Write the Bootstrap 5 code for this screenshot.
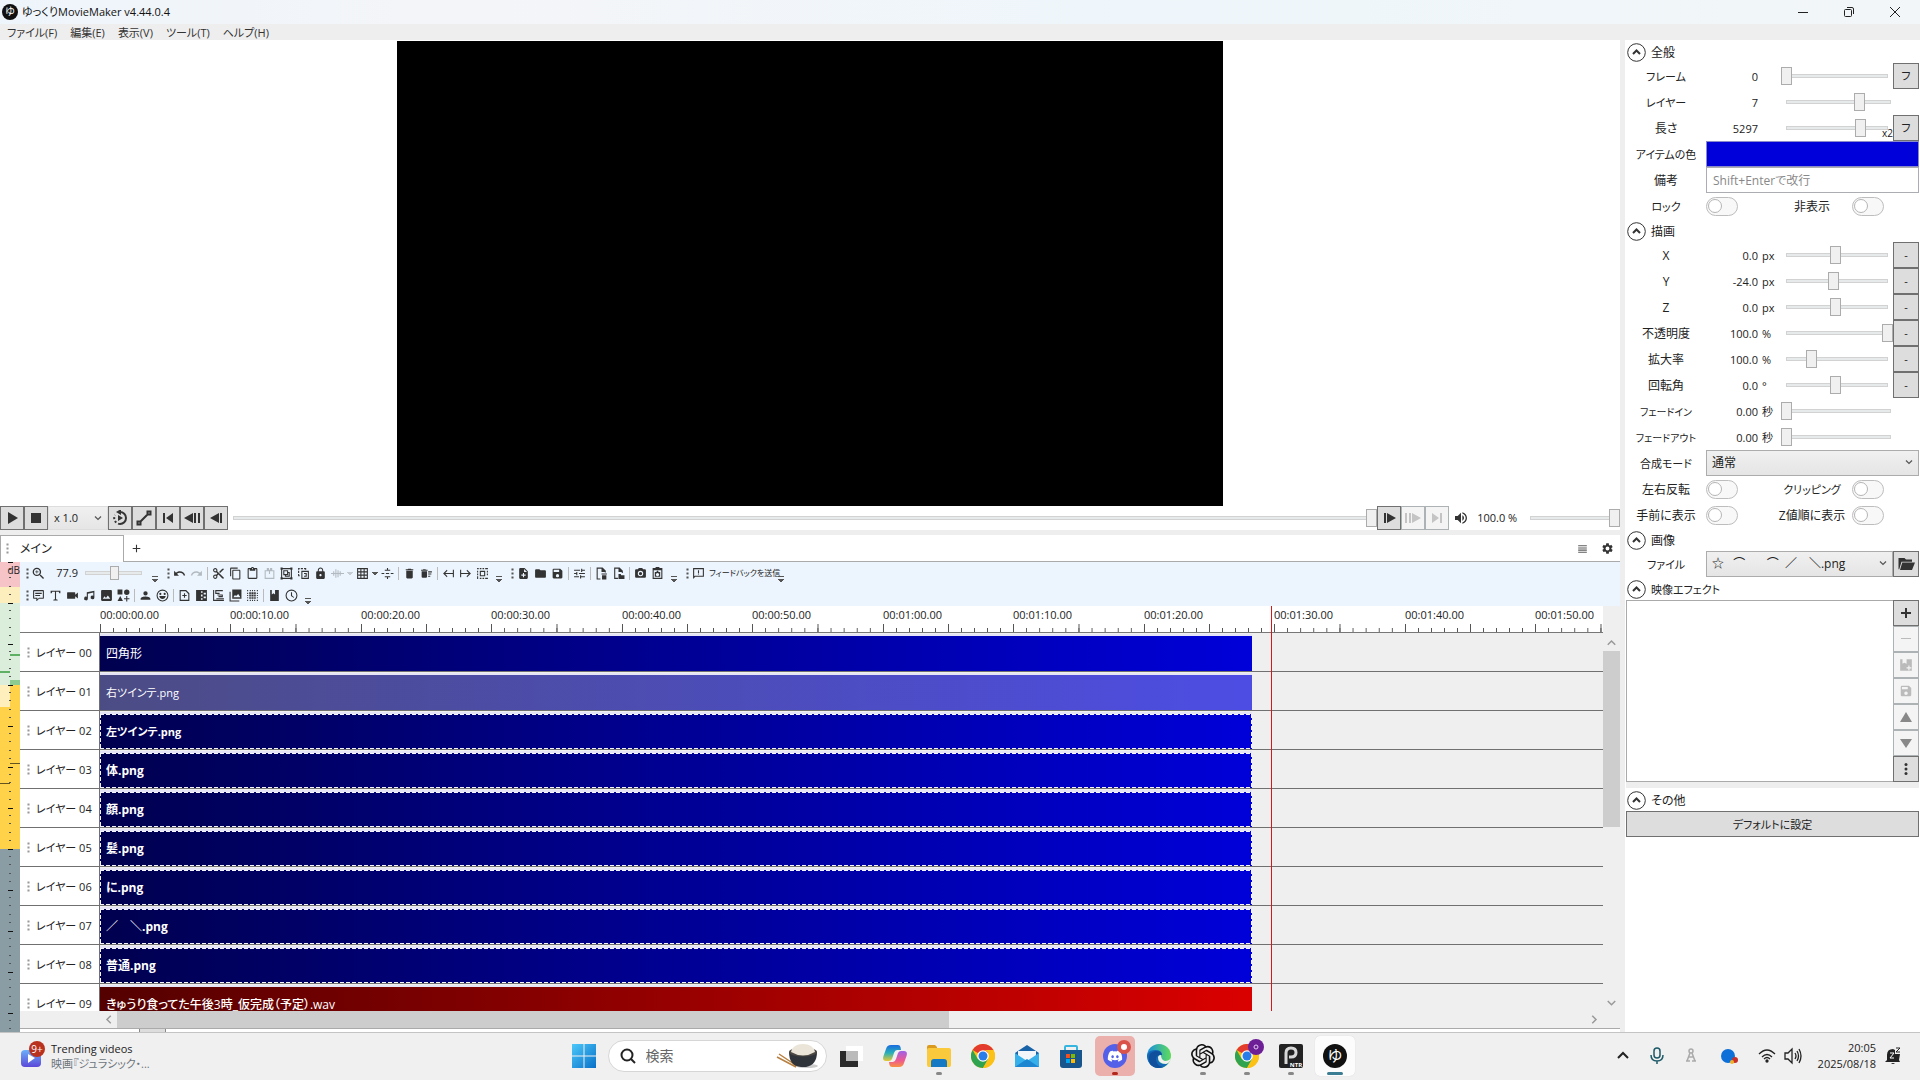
<!DOCTYPE html>
<html lang="ja">
<head>
<meta charset="utf-8">
<meta name="viewport" content="width=device-width, initial-scale=1">
<title>ゆっくりMovieMaker v4.44.0.4</title>
<link rel="stylesheet" href="https://cdn.jsdelivr.net/npm/bootstrap@5.3.0/dist/css/bootstrap.min.css">
<style>
html,body{height:100%}
body{font-family:"Open Sans","Noto Sans CJK JP",sans-serif;font-size:12px;line-height:16px;color:#222;background:#fff;font-feature-settings:"palt";overflow:hidden}
button,select,input{font-family:inherit;font-feature-settings:inherit}
svg{display:block;flex:none}
.num{font-size:11px}
.kana{font-size:11px}
.kana-s{font-size:10px}
.min0{min-width:0;min-height:0}
/* title and menu */
.titlebar{height:24px;padding:0 2px;background:linear-gradient(90deg,#eef5fb,#f4f5f8 25%,#eef6fb 60%,#f2f6f8);color:#111}
.titlebar .app-name{font-size:11px}
.winbtn{width:46px;height:20px;border:0;background:none;padding:0;display:flex;align-items:center;justify-content:center}
.menubar{height:16px;background:#eee;padding:0 7px;gap:13px}
.menubar a{color:#333;text-decoration:none;font-size:11px;line-height:17px}
/* preview */
.workspace{flex:1 1 0;min-height:0}
.splitter{width:5px;background:#eee}
.preview{height:466px;padding-top:1px}
.screen{height:100%;aspect-ratio:16/9;background:#000}
.tbtn{width:24px;height:24px;padding:0;border:1px solid #707070;border-radius:0;background:#ddd;display:flex;align-items:center;justify-content:center;flex:none}
.tbtn svg{width:16px;height:16px;fill:#333}
.tbtn:disabled{background:#f4f4f4;border-color:#adb2b5;opacity:1}
.tbtn:disabled svg{fill:#c4c4c4}
.combo{appearance:none;border:1px solid #acacac;border-radius:0;color:#222;background:url("data:image/svg+xml,%3Csvg xmlns='http://www.w3.org/2000/svg' viewBox='0 0 8 8'%3E%3Cpath d='M1 2.500l3 3 3-3' fill='none' stroke='%23555' stroke-width='1.200'/%3E%3C/svg%3E") no-repeat right 5px top 7px/8px 8px,linear-gradient(#f0f0f0,#e5e5e5);padding:0 16px 0 5px}
.combo.speed{width:60px;height:24px;border-color:#ddd;font-size:11px}
/* sliders */
.slide{appearance:none;margin:0;padding:0;height:20px;min-width:0;background:linear-gradient(#e7eaea,#e7eaea) center/calc(100% - 12px) 2px no-repeat,linear-gradient(#d2d2d2,#d2d2d2) center/calc(100% - 10px) 4px no-repeat}
.slide::-webkit-slider-runnable-track{height:18px;background:none}
.slide::-webkit-slider-thumb{appearance:none;width:11px;height:18px;background:#f0f0f0;border:1px solid #acacac;border-radius:0}
.slide.volume{width:95px}
.slide.tiny{width:67px}
.slide.tiny::-webkit-slider-runnable-track{height:14px}
.slide.tiny::-webkit-slider-thumb{width:9px;height:14px}
/* timeline tabs */
.tabstrip{height:32px;border-top:5px solid #eee;border-bottom:1px solid #aaa}
.maintab{width:124px;height:27px;border:1px solid #aaa;border-bottom:0;background:#fff;color:#222;padding:0 0 0 3px;border-radius:0;font-size:12px;text-align:left;gap:10px}
.dots{width:6px;height:11px;background:radial-gradient(circle,#555 40%,transparent 50%) center/3px 4px repeat-y;flex:none}
.dots.faint{opacity:.6}
/* level meter */
.meter{width:20px;flex:none;font-size:10px;color:#222;position:relative;background:
 linear-gradient(#111,#111) 8px 0/5px 1px no-repeat,
 linear-gradient(#f6c4c7 25px,#fdeebd 25px 41px,#daeedb 41px 123px,#ffefbd 123px 145px,#ffd24a 145px 287px,#8a9ca4 287px)}
.meter .right-level{position:absolute;right:0;width:10px;top:118px;height:169px;background:linear-gradient(#8ccb8f 5px,#ffd24a 5px)}
.meter .peak{position:absolute;height:2px;width:10px;background:#5fb065}
.meter .peak.dark{background:#63531e;height:1px}
.meter .scale{position:absolute;inset:0;background:
 linear-gradient(#111 1px,transparent 1px) 8px 0/5px 41px repeat-y,
 linear-gradient(#555 1px,transparent 1px) 9px 7px/2px 41px repeat-y,
 linear-gradient(#555 1px,transparent 1px) 9px 15px/2px 41px repeat-y,
 linear-gradient(#555 1px,transparent 1px) 9px 24px/2px 41px repeat-y,
 linear-gradient(#555 1px,transparent 1px) 9px 32px/2px 41px repeat-y}
.meter b{position:absolute;right:0;top:0;font-weight:400}
/* tool bars */
.tools{background:#ecf5fe;padding-left:4px}
.toolrow{height:22px;display:flex;align-items:center}
.tool{width:17px;height:20px;padding:0;border:0;background:none;display:flex;align-items:center;justify-content:center;flex:none}
.tool svg,.feedback svg{width:13px;height:13px;fill:#333;stroke:none}
.tool.off svg{opacity:.3}
.tsep{width:5px;height:13px;background:linear-gradient(#bbb,#bbb) center/1px 100% no-repeat;flex:none}
.zoomval{width:33px;text-align:right;padding-right:2px}
.more{width:16px;height:20px;padding:11px 0 0 5px;border:0;background:none;margin-right:2px}
.more i,.caret{display:block;width:6px;height:6px;border-top:1px solid #555;background:linear-gradient(#555,#555) center 3px/4px 1px no-repeat,linear-gradient(#555,#555) center 4px/2px 1px no-repeat,linear-gradient(#555,#555) center 2px/6px 1px no-repeat}
.caret{width:8px;height:6px;border:0;flex:none}
.feedback{border:0;background:none;padding:0 0 0 2px;font-size:8px;width:83px;height:20px;color:#222;white-space:nowrap}
/* ruler and layers */
.ruler{height:27px;border-bottom:1px solid #777;padding-left:80px;display:grid;grid-template-columns:repeat(6,130px 131px);overflow:hidden;font-size:11px;flex:none}
.ruler span{padding-top:1px;background:linear-gradient(90deg,#555 1px,transparent 1px) 0 100%/50% 8px repeat-x,linear-gradient(90deg,#555 1px,transparent 1px) 0 100%/10% 4px repeat-x}
.layers{flex:1 1 0;min-height:0;overflow:hidden;background:#efefef;position:relative}
.layer{height:39px;border-bottom:1px solid #707070;display:flex}
.layer-name{width:80px;border-right:1px solid #707070;background:#fff;padding:1px 0 0 5px;font-size:11px;display:flex;align-items:center;gap:5px;flex:none}
.lane{flex:1;padding-top:3px}
.clip{width:77%;max-width:1152px;height:35px;padding-left:6px;color:#fff;display:flex;align-items:center;--fill:linear-gradient(90deg,#00004f,#0000d9);background:var(--fill);box-shadow:0 -2px #e4e4f6}
.clip.picked{font-weight:700;background:
 linear-gradient(90deg,#f4f4ff 4px,transparent 4px) 0 0/6px 1px repeat-x,
 linear-gradient(90deg,#f4f4ff 4px,transparent 4px) 0 100%/6px 1px repeat-x,
 linear-gradient(#f4f4ff 4px,transparent 4px) 0 0/1px 6px repeat-y,
 linear-gradient(#f4f4ff 4px,transparent 4px) 100% 0/1px 6px repeat-y,var(--fill)}
.clip.dim{--fill:linear-gradient(90deg,#4c4c85,#4d4de4)}
.clip.sound{--fill:linear-gradient(90deg,#540000,#da0000);font-weight:500}
.playhead{position:absolute;top:0;bottom:0;left:1251px;width:1px;background:#d81818}
.vbar{width:17px;background:#efefef;flex:none}
.vbar button,.hbar button{border:0;padding:0;background:none;width:17px;height:17px;display:flex;align-items:center;justify-content:center;flex:none}
.vbar svg,.hbar svg{width:9px;height:9px;fill:none;stroke:#999;stroke-width:2}
.vthumb{height:176px;background:#cdcdcd}
.hbar{height:17px;padding-left:80px;padding-right:17px;background:#efefef;flex:none}
.hthumb{width:832px;background:#cdcdcd}
.footstrip{height:4px;border-top:1px solid #aaa;background:#fff;flex:none}
.footstrip i{height:3px;width:120px;border-right:1px solid #888}
.footstrip i+i{width:26px;background:#ddd}
/* properties */
.props{width:295px;padding:0 1px}
.sect{height:23px;display:flex;align-items:center;gap:5px;padding:2px 0 0 1px;border:0;background:none;color:#222;width:100%}
.sect svg{width:19px;height:19px;fill:none;stroke:#333}
.prow{height:26px;display:grid;grid-template-columns:80px 52px 23px 112px 26px;align-items:center}
.prow>.slide:last-child{width:115px}
.prow>label{text-align:center;line-height:16px;padding-top:1px;white-space:nowrap}
.prow .val{text-align:right;font-size:11px;padding-top:1px}
.prow .unit{padding:1px 0 0 4px;font-size:11px}
.pbtn{width:26px;height:26px;border:1px solid #707070;background:#ddd;padding:0;font-size:11px;color:#222;display:flex;align-items:center;justify-content:center}
.pbtn:disabled{background:#f4f4f4;border-color:#adb2b5}
.pbtn svg{width:14px;height:14px;fill:#333}
.pbtn .big{width:18px;height:18px}
.pbtn:disabled svg{fill:#bbb}
.pbtn:disabled .arrow{fill:#888}
.prow.wide{grid-template-columns:80px 1fr}
.prow.pair{grid-template-columns:80px 66px 80px 1fr}
.prow.path{grid-template-columns:80px 1fr 26px}
.sw{appearance:none;width:32px;height:19px;margin:0;border:1px solid #bdbdbd;border-radius:10px;background:#f8f8f8;display:flex;align-items:center;padding-left:1px}
.sw::before{content:"";width:14px;height:14px;border:1px solid #b5b5b5;border-radius:50%;background:#fff}
.swatch{height:26px;border:1px solid #8a8ac8;background:#0000da;padding:0;width:100%}
.memo{height:26px;border:1px solid #abadb3;padding:0 6px;width:100%;min-width:0;border-radius:0}
.memo::placeholder{color:#888;opacity:1}
.fx{height:182px;border:1px solid #aaa;border-right:0}
.x2{position:absolute;right:0;top:9px;font-size:10px;line-height:12px;pointer-events:none}
.gapbar{height:6px;background:#eee}
.fill-btn{height:26px;border:1px solid #707070;background:#ddd;color:#222;width:100%;padding:1px 0 0}
/* taskbar */
.taskbar{height:48px;border-top:1px solid #c4c4c4;padding-bottom:2px;background:#f1f0f0;color:#222}
.side{flex:1 1 0;min-width:0}
.task{width:40px;height:40px;border:0;border-radius:5px;background:none;padding:0;display:flex;align-items:center;justify-content:center;position:relative}
.task svg{width:24px;height:24px}
.task.open::after{content:"";position:absolute;bottom:1px;width:6px;height:3px;border-radius:2px;background:#888}
.task.alert-tile{background:#ebb0ab}
.task.alert-tile::after{background:#b3261e}
.task.active{background:#fcfcfc;box-shadow:0 0 1px #ccc}
.task.active::after{width:16px;background:#3b7d92}
.findbox{width:219px;height:32px;border:1px solid #d6d6d6;border-radius:16px;background:#fff;padding:0 8px 0 11px}
.findbox input{border:0;outline:0;background:none;font-size:14px;width:110px;padding:0 0 0 10px;min-width:0}
.findbox input::placeholder{color:#666;opacity:1}
.tray{padding-right:18px}
.tray svg{width:18px;height:18px}
.widget{border:0;background:none;text-align:left;padding:0;color:#222;line-height:15px;font-size:12px;gap:6px}
.clock-text{font-size:11px;text-align:right;line-height:16px}
</style>
<script defer src="https://cdn.jsdelivr.net/npm/bootstrap@5.3.0/dist/js/bootstrap.bundle.min.js"></script>
</head>
<body class="d-flex flex-column">
<svg width="0" height="0" class="position-absolute" aria-hidden="true"><defs>
<symbol id="logo" viewBox="0 0 24 24"><circle cx="12" cy="12" r="12" fill="#111"/><text x="12" y="17" font-size="15" text-anchor="middle" fill="#fff" font-family="Noto Sans CJK JP">ゆ</text></symbol>
<symbol id="zoomin" viewBox="2 2 20 20"><path d="M15.5 14h-.79l-.28-.27A6.47 6.47 0 0 0 16 9.5 6.5 6.5 0 1 0 9.500 16c1.610 0 3.090-.59 4.230-1.570l.27.28v.79l5 4.990L20.490 19l-4.990-5zm-6 0C7.010 14 5 11.990 5 9.500S7.010 5 9.500 5 14 7.010 14 9.500 11.990 14 9.500 14zM12 10h-2v2H9v-2H7V9h2V7h1v2h2v1z"/></symbol>
<symbol id="undo" viewBox="0 0 24 24"><path d="M12.5 8c-2.650 0-5.050.99-6.900 2.600L2 7v9h9l-3.620-3.620c1.390-1.160 3.160-1.880 5.120-1.880 3.540 0 6.550 2.310 7.600 5.500l2.370-.78C21.080 11.030 17.150 8 12.500 8z"/></symbol>
<symbol id="redo" viewBox="0 0 24 24"><path transform="matrix(-1 0 0 1 24 0)" d="M12.5 8c-2.650 0-5.050.99-6.900 2.600L2 7v9h9l-3.620-3.620c1.390-1.160 3.160-1.880 5.120-1.880 3.540 0 6.550 2.310 7.600 5.500l2.370-.78C21.080 11.030 17.150 8 12.500 8z"/></symbol>
<symbol id="cut" viewBox="0 0 24 24"><path d="M9.640 7.640c.23-.5.36-1.050.36-1.640 0-2.210-1.790-4-4-4S2 3.790 2 6s1.790 4 4 4c.59 0 1.140-.13 1.640-.36L10 12l-2.360 2.360C7.140 14.130 6.590 14 6 14c-2.210 0-4 1.790-4 4s1.790 4 4 4 4-1.790 4-4c0-.59-.13-1.140-.36-1.640L12 14l7 7h3v-1L9.640 7.640zM6 8c-1.100 0-2-.89-2-2s.9-2 2-2 2 .89 2 2-.9 2-2 2zm0 12c-1.100 0-2-.89-2-2s.9-2 2-2 2 .89 2 2-.9 2-2 2zM19 3l-6 6 2 2 7-7V3z"/></symbol>
<symbol id="copy" viewBox="0 0 24 24"><path d="M16 1H4c-1.100 0-2 .9-2 2v14h2V3h12V1zm3 4H8c-1.100 0-2 .9-2 2v14c0 1.100.9 2 2 2h11c1.100 0 2-.9 2-2V7c0-1.100-.9-2-2-2zm0 16H8V7h11v14z"/></symbol>
<symbol id="paste" viewBox="0 0 24 24"><path d="M19 2h-4.180C14.400.84 13.300 0 12 0c-1.300 0-2.400.84-2.820 2H5c-1.100 0-2 .9-2 2v16c0 1.100.9 2 2 2h14c1.100 0 2-.9 2-2V4c0-1.100-.9-2-2-2zm-7 0c.55 0 1 .45 1 1s-.45 1-1 1-1-.45-1-1 .45-1 1-1zm7 18H5V4h2v3h10V4h2v16z"/></symbol>
<symbol id="pasteat" viewBox="0 0 24 24"><path d="M7 2h4v3h2V2h4v4h4v16H3V6h4zM5 8v12h14V8h-6v5h-2V8z"/></symbol>
<symbol id="group" viewBox="0 0 24 24"><path fill-rule="evenodd" d="M1 1h4v1h14V1h4v4h-1v14h1v4h-4v-1H5v1H1v-4h1V5H1zm4 3v1H4v14h1v1h14v-1h1V5h-1V4zM6 6h9v3h3v9H9v-3H6zm2 2v5h5V8zm7 3v4h-4v1h5v-5z"/></symbol>
<symbol id="ungroup" viewBox="0 0 24 24"><path fill-rule="evenodd" d="M2 2h3v2H4v1H2zm5 0h4v2H7zm6 0h4v3h-2V4h-2zM2 7h2v4H2zm0 6h2v2h1v2H2zM8 7h14v15H8zm2 2v11h10V9zm3 2h5v7h-5v-2h3v-3h-3z"/></symbol>
<symbol id="lock" viewBox="0 0 24 24"><path d="M18 8h-1V6c0-2.760-2.240-5-5-5S7 3.240 7 6v2H6c-1.100 0-2 .9-2 2v10c0 1.100.9 2 2 2h12c1.100 0 2-.9 2-2V10c0-1.100-.9-2-2-2zm-6 9c-1.100 0-2-.9-2-2s.9-2 2-2 2 .9 2 2-.9 2-2 2zm3.100-9H8.900V6a3.100 3.100 0 0 1 6.200 0v2z"/></symbol>
<symbol id="wave" viewBox="0 0 24 24"><path d="M0 11h4V8h2v3h2V4h2v7h2V6h2v5h2V8h2v3h6v2h-6v3h-2v-3h-2v6h-2v-6h-2v7H8v-7H6v3H4v-3H0z"/></symbol>
<symbol id="grid" viewBox="0 0 24 24"><path fill-rule="evenodd" d="M2 2h20v20H2zm2 2v4h4V4zm6 0v4h4V4zm6 0v4h4V4zM4 10v4h4v-4zm6 0v4h4v-4zm6 0v4h4v-4zM4 16v4h4v-4zm6 0v4h4v-4zm6 0v4h4v-4z"/></symbol>
<symbol id="snap" viewBox="0 0 24 24"><path d="M11 2h2v3h4v2H7V5h4zM1 11h5v2H1zm8 0h6v2H9zm9 0h5v2h-5zM7 17h10v2h-4v3h-2v-3H7z"/></symbol>
<symbol id="trash" viewBox="0 0 24 24"><path d="M6 19c0 1.100.9 2 2 2h8c1.100 0 2-.9 2-2V7H6v12zM19 4h-3.500l-1-1h-5l-1 1H5v2h14V4z"/></symbol>
<symbol id="trashlist" viewBox="0 0 24 24"><path d="M3 18a2 2 0 0 0 2 2h6a2 2 0 0 0 2-2V8H3zM14 5h-3l-1-1H6L5 5H2v2h12zm1 3h7v2h-7zm0 4h6v2h-6zm0 4h4v2h-4z"/></symbol>
<symbol id="toleft" viewBox="0 0 24 24"><path d="M20 5h2v14h-2v-6H6l4 4-1 2-7-7 7-7 1 2-4 4h14z"/></symbol>
<symbol id="toright" viewBox="0 0 24 24"><path transform="matrix(-1 0 0 1 24 0)" d="M20 5h2v14h-2v-6H6l4 4-1 2-7-7 7-7 1 2-4 4h14z"/></symbol>
<symbol id="select" viewBox="0 0 24 24"><path fill-rule="evenodd" d="M2 2h3v2H2zm5 0h3v2H7zm5 0h3v2h-3zm5 0h5v2h-5zM2 7h2v3H2zm0 5h2v3H2zm0 5h2v5H2zm5 3h3v2H7zm5 0h3v2h-3zm5 0h5v2h-5zm3-13h2v3h-2zm0 5h2v3h-2zM7 7h10v10H7zm2 2v6h6V9z"/></symbol>
<symbol id="filenew" viewBox="0 0 24 24"><path fill-rule="evenodd" d="M6 2a2 2 0 0 0-2 2v16c0 1.100.9 2 2 2h12a2 2 0 0 0 2-2V8l-6-6zm5 9h2v3h3v2h-3v3h-2v-3H8v-2h3zm2-7.500L18.500 9H13z"/></symbol>
<symbol id="folder" viewBox="0 0 24 24"><path d="M10 4H4a2 2 0 0 0-2 2v12c0 1.100.9 2 2 2h16c1.100 0 2-.9 2-2V8c0-1.100-.9-2-2-2h-8l-2-2z"/></symbol>
<symbol id="folderopen" viewBox="0 0 24 24"><path d="M2 4h8l2 2h8v3H6L3 19H2zm5 6h17l-4 10H4z"/></symbol>
<symbol id="save" viewBox="0 0 24 24"><path fill-rule="evenodd" d="M17 3H5a2 2 0 0 0-2 2v14a2 2 0 0 0 2 2h14c1.100 0 2-.9 2-2V7l-4-4zm-5 16a3 3 0 1 1 0-6 3 3 0 0 1 0 6zm3-10H5V5h10v4z"/></symbol>
<symbol id="tune" viewBox="0 0 24 24"><path d="M2 5h11v2H2zm13-2h2v2h5v2h-5v2h-2zM2 11h4V9h2v6H6v-2H2zm9 0h11v2H11zm-9 6h9v2H2zm11-2h2v2h7v2h-7v2h-2z"/></symbol>
<symbol id="filetrash" viewBox="0 0 24 24"><path d="M3 1h11l6 6v3h-2V9h-6V3H5v18h5v2H3zm9 11h10v2H12zm1 3h8v8h-8z"/></symbol>
<symbol id="filecopy" viewBox="0 0 24 24"><path d="M4 1h10l6 6v4h-2V9h-6V3H6v17h5v2H4zm8 12h4l1 2h6v7H12z"/></symbol>
<symbol id="camera" viewBox="0 0 24 24"><path fill-rule="evenodd" d="M4 4h3l2-2h6l2 2h3a2 2 0 0 1 2 2v12a2 2 0 0 1-2 2H4a2 2 0 0 1-2-2V6a2 2 0 0 1 2-2m8 3a5 5 0 1 0 0 10 5 5 0 0 0 0-10m0 2a3 3 0 1 1 0 6 3 3 0 0 1 0-6"/></symbol>
<symbol id="camclip" viewBox="0 0 24 24"><path fill-rule="evenodd" d="M3 2h5l1-2h6l1 2h5v20H3zm2 4v14h14V6zm2 3h3l1-2h2l1 2h3v9H7zm5 2a3 3 0 1 0 0 6 3 3 0 0 0 0-6"/></symbol>
<symbol id="feedback" viewBox="0 0 24 24"><path fill-rule="evenodd" d="M2 2h20v16H6l-4 4zm2 2v13l1-1h15V4zm7 2h2v5h-2zm0 6h2v2h-2z"/></symbol>
<symbol id="comment" viewBox="0 0 24 24"><path fill-rule="evenodd" d="M3 2h18l1 1v14l-1 1h-8l-4 4H8v-4H3l-1-1V3zm1 2v12h6v3l3-3h7V4zm2 3h12v2H6zm0 4h9v2H6z"/></symbol>
<symbol id="tee" viewBox="0 0 24 24"><path d="M3 3h18v5h-2l-1-3h-5v14l3 1v1H8v-1l3-1V5H6L5 8H3z"/></symbol>
<symbol id="video" viewBox="0 0 24 24"><path d="M17 10.500V7c0-.55-.45-1-1-1H3c-.55 0-1 .45-1 1v10c0 .55.45 1 1 1h13c.55 0 1-.45 1-1v-3.500l5 4v-11l-5 4z"/></symbol>
<symbol id="music" viewBox="0 0 24 24"><path d="M21 3v12.500a3.500 3.500 0 1 1-2-3.160V6.470l-10 2.130v8.900a3.500 3.500 0 1 1-2-3.160V6l14-3z"/></symbol>
<symbol id="image" viewBox="0 0 24 24"><path d="M22 20V4c0-1.100-.9-2-2-2H4c-1.100 0-2 .9-2 2v16c0 1.100.9 2 2 2h16c1.100 0 2-.9 2-2zM8.500 13.500l2.500 3L14.500 12l4.500 6H5l3.500-4.500z"/></symbol>
<symbol id="images" viewBox="0 0 24 24"><path fill-rule="evenodd" d="M6 1h17v17H6zM1 5h2v16h16v2H1zm7 10h13l-4-6-4 4-2-2z"/></symbol>
<symbol id="shapes" viewBox="0 0 24 24"><path d="M1 1h9v9H1zM18 1a5 5 0 1 1 0 10 5 5 0 0 1 0-10M6 13l5 9H1zm11 0h2v4h4v2h-4v4h-2v-4h-4v-2h4z"/></symbol>
<symbol id="person" viewBox="0 0 24 24"><path d="M12 12a4 4 0 1 0 0-8 4 4 0 0 0 0 8zm0 2c-2.670 0-9 1.340-9 4v2h18v-2c0-2.660-6.330-4-9-4z"/></symbol>
<symbol id="smile" viewBox="0 0 24 24"><path fill-rule="evenodd" d="M12 1a11 11 0 1 0 0 22 11 11 0 0 0 0-22m0 2a9 9 0 1 1 0 18 9 9 0 0 1 0-18M8 7a2 2 0 1 1 0 4 2 2 0 0 1 0-4m8 0a2 2 0 1 1 0 4 2 2 0 0 1 0-4M6 13h12c-1 7-11 7-12 0"/></symbol>
<symbol id="fileadd" viewBox="0 0 24 24"><path fill-rule="evenodd" d="M3 2h12l6 6v14H3zm2 2v16h14V9l-5-5zm6 4h2v3h3v2h-3v3h-2v-3H8v-2h3z"/></symbol>
<symbol id="trans" viewBox="0 0 24 24"><path fill-rule="evenodd" d="M2 2h20v20H2zm9 2v3h3V4zm5 3v3h4V7zm-5 3v4h3v-4zm5 4v3h4v-3zm-5 3v3h3v-3z"/></symbol>
<symbol id="gantt" viewBox="0 0 24 24"><path d="M2 2h2v18h18v2H2zm4 0h14v2H8v3h6v2H6zm4 8h10v5h-8v-2h6v-1h-8zm-2 7h14v2H8z"/></symbol>
<symbol id="dotsel" viewBox="0 0 24 24"><path d="M2 2h2v2H2zm5 0h2v2H7zm4 0h2v2h-2zm4 0h2v2h-2zm5 0h2v2h-2zM2 7h2v2H2zm18 0h2v2h-2zM2 11h2v2H2zm18 0h2v2h-2zM2 15h2v2H2zm18 0h2v2h-2zM2 20h2v2H2zm5 0h2v2H7zm4 0h2v2h-2zm4 0h2v2h-2zm5 0h2v2h-2zM6 6h3v3H6zm4 0h4v3h-4zm5 0h3v3h-3zm-9 4h3v4H6zm4 0h4v4h-4zm5 0h3v4h-3zm-9 5h3v3H6zm4 0h4v3h-4zm5 0h3v3h-3z"/></symbol>
<symbol id="book" viewBox="0 0 24 24"><path d="M4 2h3v8l3-2 3 2V2h7v20H4z"/></symbol>
<symbol id="bookadd" viewBox="0 0 24 24"><path fill-rule="evenodd" d="M2 2h4v8l3-2 4 2V2h9v20H2zm14 11h2v3h3v2h-3v3h-2v-3h-3v-2h3z"/></symbol>
<symbol id="clock" viewBox="0 0 24 24"><path fill-rule="evenodd" d="M12 1a11 11 0 1 0 0 22 11 11 0 0 0 0-22m0 2a9 9 0 1 1 0 18 9 9 0 0 1 0-18m-1 3h2v6l4 3-1 1-5-3z"/></symbol>
<symbol id="gear" viewBox="0 0 24 24"><path d="M19.140 12.940c.04-.3.06-.61.06-.94 0-.32-.02-.64-.07-.94l2.030-1.580c.18-.14.23-.41.12-.61l-1.920-3.320c-.12-.22-.37-.29-.59-.22l-2.390.96c-.5-.38-1.030-.7-1.620-.94l-.36-2.540c-.04-.24-.24-.41-.48-.41h-3.840c-.24 0-.43.17-.47.41l-.36 2.540c-.59.24-1.130.57-1.620.94l-2.390-.96c-.22-.08-.47 0-.59.22L2.740 8.870c-.12.21-.08.47.12.61l2.030 1.580c-.05.3-.09.63-.09.94s.02.64.07.94l-2.030 1.580c-.18.14-.23.41-.12.61l1.920 3.320c.12.22.37.29.59.22l2.390-.96c.5.38 1.030.7 1.620.94l.36 2.540c.05.24.24.41.48.41h3.840c.24 0 .44-.17.47-.41l.36-2.540c.59-.24 1.130-.56 1.620-.94l2.390.96c.22.08.47 0 .59-.22l1.920-3.320c.12-.22.07-.47-.12-.61l-2.010-1.580zM12 15.600a3.600 3.600 0 1 1 0-7.200 3.600 3.600 0 0 1 0 7.200z"/></symbol>
<symbol id="volume" viewBox="0 0 24 24"><path d="M3 9v6h4l5 5V4L7 9H3zm13.500 3c0-1.770-1.020-3.290-2.500-4.030v8.050c1.480-.73 2.500-2.250 2.500-4.020zM14 3.230v2.060c2.890.86 5 3.540 5 6.710s-2.110 5.850-5 6.710v2.060c4.010-.91 7-4.490 7-8.770s-2.990-7.860-7-8.770z"/></symbol>
<symbol id="fold" viewBox="0 0 19 19"><circle cx="9.500" cy="9.500" r="8.800"/><path d="M6 11l3.500-3.500L13 11" stroke-width="2"/></symbol>
<symbol id="chrome" viewBox="0 0 24 24"><circle cx="12" cy="12" r="12" fill="#fbc116"/><path d="M12 12L1.600 6A12 12 0 0 1 22.400 6z" fill="#e33b2e"/><path d="M1.600 6A12 12 0 0 0 12 24l5.200-9L12 12 6.800 15z" fill="#30a350"/><path d="M12 24l5.200-9A6 6 0 0 0 12 6h10.400A12 12 0 0 1 12 24" fill="#fbc116"/><circle cx="12" cy="12" r="5.800" fill="#fff"/><circle cx="12" cy="12" r="4.500" fill="#2a7de9"/></symbol>
<linearGradient id="gwin" x1="0" y1="0" x2="1" y2="1"><stop offset="0" stop-color="#4cc8fa"/><stop offset="1" stop-color="#0870c8"/></linearGradient>
<linearGradient id="gedge" x1="0" y1="0" x2="1" y2="0"><stop offset="0" stop-color="#1a8fe0"/><stop offset="1" stop-color="#5fdc5a"/></linearGradient>
<linearGradient id="gcop" x1="0" y1="0" x2="0" y2="1"><stop offset="0" stop-color="#1a6be0"/><stop offset=".5" stop-color="#28b0b8"/><stop offset="1" stop-color="#e8c830"/></linearGradient>
<linearGradient id="gcop2" x1="0" y1="0" x2="0" y2="1"><stop offset="0" stop-color="#a060e8"/><stop offset=".6" stop-color="#ee5a90"/><stop offset="1" stop-color="#f89040"/></linearGradient>
<linearGradient id="gvid" x1="0" y1="0" x2="0" y2="1"><stop offset="0" stop-color="#6db0fa"/><stop offset="1" stop-color="#5a48d8"/></linearGradient>
</defs></svg>

<header>
 <div class="titlebar d-flex align-items-center">
  <svg class="me-1" width="16" height="16"><use href="#logo"/></svg>
  <span class="app-name flex-grow-1">ゆっくりMovieMaker v4.44.0.4</span>
  <button class="winbtn" aria-label="最小化"><svg width="12" height="12"><path d="M1 6.500h10" stroke="#222"/></svg></button>
  <button class="winbtn" aria-label="元に戻す"><svg width="12" height="12" fill="none" stroke="#222"><rect x="1.500" y="3.500" width="7" height="7" rx="1"/><path d="M4 1.500h5q1.500 0 1.500 1.500v5"/></svg></button>
  <button class="winbtn" aria-label="閉じる"><svg width="12" height="12"><path d="M1 1l10 10M11 1L1 11" stroke="#222"/></svg></button>
 </div>
 <nav class="menubar d-flex" aria-label="メニュー"><a href="#">ファイル(F)</a><a href="#">編集(E)</a><a href="#">表示(V)</a><a href="#">ツール(T)</a><a href="#">ヘルプ(H)</a></nav>
</header>

<main class="workspace d-flex">
 <div class="d-flex flex-column flex-grow-1 min0">
  <section class="preview d-flex justify-content-center"><div class="screen"></div></section>
  <div class="d-flex align-items-center">
   <button class="tbtn" aria-label="再生"><svg viewBox="0 0 16 16"><path d="M4 2l10 6-10 6z"/></svg></button>
   <button class="tbtn" aria-label="停止"><svg viewBox="0 0 16 16"><path d="M3 3h10v10H3z"/></svg></button>
   <select class="combo speed" aria-label="再生速度"><option>x 1.0</option></select>
   <button class="tbtn" aria-label="ループ"><svg viewBox="0 0 16 16"><path d="M8 2a6 6 0 0 1 0 12" fill="none" stroke="#333" stroke-width="2"/><path d="M8 14a6 6 0 0 1-5-9" fill="none" stroke="#333" stroke-width="2" stroke-dasharray="2 2"/><path d="M9-1v6L4 2zM6 5l5 3-5 3z"/></svg></button>
   <button class="tbtn" aria-label="軌跡"><svg viewBox="0 0 16 16"><path d="M4 12L12 4M1.500 11.500h3v3h-3zM11.500 1.500h3v3h-3z" fill="#ddd" stroke="#333" stroke-width="2"/></svg></button>
   <button class="tbtn" aria-label="先頭へ"><svg viewBox="0 0 16 16"><path d="M3 3h2v10H3zM13 3v10L6 8z"/></svg></button>
   <button class="tbtn" aria-label="戻る"><svg viewBox="0 0 16 16"><path d="M9 3v10L0 8zM10 3h2v10h-2zM14 3h2v10h-2z"/></svg></button>
   <button class="tbtn" aria-label="1フレーム戻る"><svg viewBox="0 0 16 16"><path d="M11 3v10L2 8zM12 3h2v10h-2z"/></svg></button>
   <input type="range" class="slide flex-grow-1" aria-label="再生位置" min="0" max="100" value="100">
   <button class="tbtn" aria-label="1フレーム進む"><svg viewBox="0 0 16 16"><path d="M3 3h2v10H3zM6 3v10l9-5z"/></svg></button>
   <button class="tbtn" aria-label="進む" disabled><svg viewBox="0 0 16 16"><path d="M0 3h2v10H0zM4 3h2v10H4zM7 3v10l9-5z"/></svg></button>
   <button class="tbtn" aria-label="末尾へ" disabled><svg viewBox="0 0 16 16"><path d="M3 3v10l7-5zM11 3h2v10h-2z"/></svg></button>
   <svg class="ms-1 me-2" width="16" height="16" fill="#333"><use href="#volume"/></svg>
   <label for="vol" class="num me-2">100.0 %</label>
   <input id="vol" type="range" class="slide volume" value="100">
  </div>
  <div class="tabstrip d-flex align-items-center">
   <button class="maintab d-flex align-items-center"><span class="dots faint"></span>メイン</button>
   <button class="tool ms-1" aria-label="タブを追加"><svg viewBox="0 0 12 12"><path d="M5 2h1v3h3v1H6v3H5V6H2V5h3z" transform="translate(.5 .5)"/></svg></button>
   <button class="tool ms-auto me-2" aria-label="一覧"><svg viewBox="0 0 12 12"><path d="M2 3h8v1H2zM2 5h8v1H2zM2 7h8v1H2zM2 9h8v1H2z" opacity=".8"/></svg></button>
   <button class="tool me-1" aria-label="設定"><svg><use href="#gear"/></svg></button>
  </div>
  <div class="d-flex flex-grow-1 min0">
   <div class="meter"><div class="right-level"></div><div class="scale"></div><i class="peak" style="top:92px;left:10px"></i><i class="peak" style="top:109px;left:0"></i><i class="peak dark" style="top:201px;left:10px"></i><i class="peak dark" style="top:221px;left:0"></i><b>dB</b></div>
   <div class="d-flex flex-column flex-grow-1 min0">
    <div class="tools" role="toolbar" aria-label="ツール">
     <div class="toolrow">
      <span class="dots"></span>
      <button class="tool" aria-label="拡大"><svg><use href="#zoomin"/></svg></button>
      <label for="tz" class="num zoomval">77.9</label>
      <input id="tz" type="range" class="slide tiny" value="52">
      <button class="more" aria-label="その他"><i></i></button><span class="dots"></span>
      <button class="tool" aria-label="元に戻す"><svg><use href="#undo"/></svg></button>
      <button class="tool off" aria-label="やり直し"><svg><use href="#redo"/></svg></button><span class="tsep"></span>
      <button class="tool" aria-label="切り取り"><svg><use href="#cut"/></svg></button>
      <button class="tool" aria-label="コピー"><svg><use href="#copy"/></svg></button>
      <button class="tool" aria-label="貼り付け"><svg><use href="#paste"/></svg></button>
      <button class="tool off" aria-label="挿入貼り付け"><svg><use href="#pasteat"/></svg></button>
      <button class="tool" aria-label="グループ化"><svg><use href="#group"/></svg></button>
      <button class="tool" aria-label="グループ解除"><svg><use href="#ungroup"/></svg></button>
      <button class="tool" aria-label="ロック"><svg><use href="#lock"/></svg></button>
      <button class="tool off" aria-label="波形"><svg><use href="#wave"/></svg></button><i class="caret opacity-25"></i>
      <button class="tool" aria-label="グリッド"><svg><use href="#grid"/></svg></button><i class="caret"></i>
      <button class="tool" aria-label="スナップ"><svg><use href="#snap"/></svg></button><span class="tsep"></span>
      <button class="tool" aria-label="削除"><svg><use href="#trash"/></svg></button>
      <button class="tool" aria-label="詰めて削除"><svg><use href="#trashlist"/></svg></button><span class="tsep"></span>
      <button class="tool" aria-label="左を選択"><svg><use href="#toleft"/></svg></button>
      <button class="tool" aria-label="右を選択"><svg><use href="#toright"/></svg></button>
      <button class="tool" aria-label="すべて選択"><svg><use href="#select"/></svg></button>
      <button class="more" aria-label="その他"><i></i></button><span class="dots"></span>
      <button class="tool" aria-label="新規"><svg><use href="#filenew"/></svg></button>
      <button class="tool" aria-label="開く"><svg><use href="#folder"/></svg></button>
      <button class="tool" aria-label="保存"><svg><use href="#save"/></svg></button><span class="tsep"></span>
      <button class="tool" aria-label="調整"><svg><use href="#tune"/></svg></button><span class="tsep"></span>
      <button class="tool" aria-label="キャッシュ削除"><svg><use href="#filetrash"/></svg></button>
      <button class="tool" aria-label="書き出し"><svg><use href="#filecopy"/></svg></button><span class="tsep"></span>
      <button class="tool" aria-label="画像保存"><svg><use href="#camera"/></svg></button>
      <button class="tool" aria-label="画像コピー"><svg><use href="#camclip"/></svg></button>
      <button class="more" aria-label="その他"><i></i></button><span class="dots"></span>
      <button class="feedback d-flex align-items-center gap-1"><svg><use href="#feedback"/></svg>フィードバックを送信</button>
      <button class="more" aria-label="その他"><i></i></button>
     </div>
     <div class="toolrow">
      <span class="dots"></span>
      <button class="tool" aria-label="ボイス"><svg><use href="#comment"/></svg></button>
      <button class="tool" aria-label="テキスト"><svg><use href="#tee"/></svg></button>
      <button class="tool" aria-label="動画"><svg><use href="#video"/></svg></button>
      <button class="tool" aria-label="音声"><svg><use href="#music"/></svg></button>
      <button class="tool" aria-label="画像"><svg><use href="#image"/></svg></button>
      <button class="tool" aria-label="図形"><svg><use href="#shapes"/></svg></button><span class="tsep"></span>
      <button class="tool" aria-label="立ち絵"><svg><use href="#person"/></svg></button>
      <button class="tool" aria-label="表情"><svg><use href="#smile"/></svg></button><span class="tsep"></span>
      <button class="tool" aria-label="エフェクト"><svg><use href="#fileadd"/></svg></button>
      <button class="tool" aria-label="場面切り替え"><svg><use href="#trans"/></svg></button>
      <button class="tool" aria-label="シーン"><svg><use href="#gantt"/></svg></button>
      <button class="tool" aria-label="画面の複製"><svg><use href="#images"/></svg></button>
      <button class="tool" aria-label="グループ制御"><svg><use href="#dotsel"/></svg></button><span class="tsep"></span>
      <button class="tool" aria-label="テンプレート"><svg><use href="#book"/></svg></button>
      <button class="tool" aria-label="履歴"><svg><use href="#clock"/></svg></button>
      <button class="more" aria-label="その他"><i></i></button>
     </div>
    </div>
    <div class="d-flex flex-grow-1 min0">
     <div class="d-flex flex-column flex-grow-1 position-relative min0">
      <div class="ruler"><span>00:00:00.00</span><span>00:00:10.00</span><span>00:00:20.00</span><span>00:00:30.00</span><span>00:00:40.00</span><span>00:00:50.00</span><span>00:01:00.00</span><span>00:01:10.00</span><span>00:01:20.00</span><span>00:01:30.00</span><span>00:01:40.00</span><span>00:01:50.00</span></div>
      <div class="layers">
       <div class="layer"><div class="layer-name"><span class="dots faint"></span>レイヤー 00</div><div class="lane"><div class="clip">四角形</div></div></div>
       <div class="layer"><div class="layer-name"><span class="dots faint"></span>レイヤー 01</div><div class="lane"><div class="clip dim kana">右ツインテ.png</div></div></div>
       <div class="layer"><div class="layer-name"><span class="dots faint"></span>レイヤー 02</div><div class="lane"><div class="clip picked kana">左ツインテ.png</div></div></div>
       <div class="layer"><div class="layer-name"><span class="dots faint"></span>レイヤー 03</div><div class="lane"><div class="clip picked">体.png</div></div></div>
       <div class="layer"><div class="layer-name"><span class="dots faint"></span>レイヤー 04</div><div class="lane"><div class="clip picked">顔.png</div></div></div>
       <div class="layer"><div class="layer-name"><span class="dots faint"></span>レイヤー 05</div><div class="lane"><div class="clip picked">髪.png</div></div></div>
       <div class="layer"><div class="layer-name"><span class="dots faint"></span>レイヤー 06</div><div class="lane"><div class="clip picked">に.png</div></div></div>
       <div class="layer"><div class="layer-name"><span class="dots faint"></span>レイヤー 07</div><div class="lane"><div class="clip picked">／　＼.png</div></div></div>
       <div class="layer"><div class="layer-name"><span class="dots faint"></span>レイヤー 08</div><div class="lane"><div class="clip picked">普通.png</div></div></div>
       <div class="layer"><div class="layer-name"><span class="dots faint"></span>レイヤー 09</div><div class="lane"><div class="clip sound">きゅうり食ってた午後3時_仮完成（予定）.wav</div></div></div>
      </div>
      <div class="playhead"></div>
     </div>
     <div class="vbar d-flex flex-column pt-4">
      <button class="mt-1" aria-label="上へ"><svg viewBox="0 0 12 12"><path d="M1 9l5-5 5 5"/></svg></button>
      <div class="vthumb"></div>
      <button class="mt-auto" aria-label="下へ"><svg viewBox="0 0 12 12"><path d="M1 4l5 5 5-5"/></svg></button>
     </div>
    </div>
    <div class="hbar d-flex">
     <button aria-label="左へ"><svg viewBox="0 0 12 12"><path d="M9 1L4 6l5 5"/></svg></button>
     <div class="hthumb"></div>
     <button class="ms-auto" aria-label="右へ"><svg viewBox="0 0 12 12"><path d="M3 1l5 5-5 5"/></svg></button>
    </div>
    <div class="footstrip d-flex"><i></i><i></i></div>
   </div>
  </div>
 </div>
 <div class="splitter"></div>
 <aside class="props">
  <button class="sect"><svg><use href="#fold"/></svg>全般</button>
  <div class="prow"><label for="p1" class="kana">フレーム</label><span class="val">0</span><span class="unit"></span><input id="p1" type="range" class="slide" value="0"><button class="pbtn">フ</button></div>
  <div class="prow"><label for="p2" class="kana">レイヤー</label><span class="val">7</span><span class="unit"></span><input id="p2" type="range" class="slide" value="70"></div>
  <div class="prow"><label for="p3">長さ</label><span class="val">5297</span><span class="unit"></span><div class="position-relative d-flex"><input id="p3" type="range" class="slide w-100" value="73"><span class="x2">x2</span></div><button class="pbtn">フ</button></div>
  <div class="prow wide"><label for="p4" class="kana">アイテムの色</label><button id="p4" class="swatch" aria-label="アイテムの色"></button></div>
  <div class="prow wide"><label for="p5">備考</label><input id="p5" type="text" class="memo" placeholder="Shift+Enterで改行"></div>
  <div class="prow pair"><label for="s1" class="kana">ロック</label><input id="s1" type="checkbox" role="switch" class="sw"><label for="s2">非表示</label><input id="s2" type="checkbox" role="switch" class="sw"></div>
  <button class="sect"><svg><use href="#fold"/></svg>描画</button>
  <div class="prow"><label for="q1">X</label><span class="val">0.0</span><span class="unit">px</span><input id="q1" type="range" class="slide" value="49"><button class="pbtn">-</button></div>
  <div class="prow"><label for="q2">Y</label><span class="val">-24.0</span><span class="unit">px</span><input id="q2" type="range" class="slide" value="47"><button class="pbtn">-</button></div>
  <div class="prow"><label for="q3">Z</label><span class="val">0.0</span><span class="unit">px</span><input id="q3" type="range" class="slide" value="49"><button class="pbtn">-</button></div>
  <div class="prow"><label for="q4">不透明度</label><span class="val">100.0</span><span class="unit">%</span><input id="q4" type="range" class="slide" value="100"><button class="pbtn">-</button></div>
  <div class="prow"><label for="q5">拡大率</label><span class="val">100.0</span><span class="unit">%</span><input id="q5" type="range" class="slide" value="25"><button class="pbtn">-</button></div>
  <div class="prow"><label for="q6">回転角</label><span class="val">0.0</span><span class="unit">°</span><input id="q6" type="range" class="slide" value="49"><button class="pbtn">-</button></div>
  <div class="prow"><label for="q7" class="kana-s">フェードイン</label><span class="val">0.00</span><span class="unit">秒</span><input id="q7" type="range" class="slide" value="0"></div>
  <div class="prow"><label for="q8" class="kana-s">フェードアウト</label><span class="val">0.00</span><span class="unit">秒</span><input id="q8" type="range" class="slide" value="0"></div>
  <div class="prow wide"><label for="q9" class="kana">合成モード</label><select id="q9" class="combo w-100 h-100"><option>通常</option></select></div>
  <div class="prow pair"><label for="s3">左右反転</label><input id="s3" type="checkbox" role="switch" class="sw"><label for="s4" class="kana">クリッピング</label><input id="s4" type="checkbox" role="switch" class="sw"></div>
  <div class="prow pair"><label for="s5">手前に表示</label><input id="s5" type="checkbox" role="switch" class="sw"><label for="s6">Z値順に表示</label><input id="s6" type="checkbox" role="switch" class="sw"></div>
  <button class="sect"><svg><use href="#fold"/></svg>画像</button>
  <div class="prow path"><label for="f1" class="kana">ファイル</label><select id="f1" class="combo w-100 h-100"><option>☆&nbsp;&nbsp;&nbsp;⌒　&nbsp;&nbsp;&nbsp;⌒&nbsp;&nbsp;／　＼.png</option></select><button class="pbtn" aria-label="参照"><svg class="big"><use href="#folderopen"/></svg></button></div>
  <button class="sect"><svg><use href="#fold"/></svg><span class="kana">映像エフェクト</span></button>
  <div class="d-flex">
   <div class="fx flex-grow-1"></div>
   <div>
    <button class="pbtn" aria-label="追加"><svg viewBox="0 0 14 14"><path d="M6 2h2v4h4v2H8v4H6V8H2V6h4z"/></svg></button>
    <button class="pbtn" disabled aria-label="削除"><svg viewBox="0 0 14 14"><path d="M2 6h10v1H2z"/></svg></button>
    <button class="pbtn" disabled aria-label="テンプレートに追加"><svg><use href="#bookadd"/></svg></button>
    <button class="pbtn" disabled aria-label="保存"><svg><use href="#save"/></svg></button>
    <button class="pbtn" disabled aria-label="上へ"><svg class="arrow" viewBox="0 0 14 14"><path d="M7 2l6 10H1z"/></svg></button>
    <button class="pbtn" disabled aria-label="下へ"><svg class="arrow" viewBox="0 0 14 14"><path d="M7 12L1 3h12z"/></svg></button>
    <button class="pbtn" aria-label="メニュー"><svg viewBox="0 0 14 14"><circle cx="7" cy="2.500" r="1.500"/><circle cx="7" cy="7" r="1.500"/><circle cx="7" cy="11.500" r="1.500"/></svg></button>
   </div>
  </div>
  <div class="gapbar"></div>
  <button class="sect"><svg><use href="#fold"/></svg>その他</button>
  <button class="fill-btn kana">デフォルトに設定</button>
 </aside>
</main>

<footer class="taskbar d-flex align-items-center">
 <div class="side ps-3"><button class="widget d-flex align-items-center">
  <svg width="29" height="30" viewBox="0 0 29 30"><rect x="5" y="9" width="20" height="17" rx="4" fill="url(#gvid)"/><path d="M12 13l7 4-7 5z" fill="#fff"/><circle cx="21" cy="8" r="8" fill="#b8321f"/><text x="21" y="12" font-size="10" text-anchor="middle" fill="#fff" font-family="Open Sans">9+</text></svg>
  <span><span class="kana">Trending videos</span><br><span class="text-secondary kana">映画『ジュラシック・...</span></span></button></div>
 <div class="d-flex align-items-center gap-1">
  <button class="task" aria-label="スタート"><svg viewBox="0 0 24 24" fill="url(#gwin)"><path d="M0 0h11.500v11.500H0zM12.500 0H24v11.500H12.500zM0 12.500h11.500V24H0zM12.500 12.500H24V24H12.500z"/></svg></button>
  <div class="findbox d-flex align-items-center"><svg width="16" height="16" fill="none" stroke="#222" stroke-width="2"><circle cx="7" cy="7" r="5.500"/><path d="M11 11l4 4"/></svg><input type="search" aria-label="検索" placeholder="検索">
   <svg class="ms-auto" width="42" height="26" viewBox="0 0 42 26"><path d="M1 14l19 10M3 11l18 12" stroke="#b88040" stroke-width="1.500"/><ellipse cx="31" cy="23" rx="11" ry="2" fill="#ccc"/><path d="M13 9q0 14 12 15h5q11-2 11-15z" fill="#2f333a"/><ellipse cx="27" cy="9" rx="14" ry="4.500" fill="#4b4742"/><path d="M15 9q2-8 12-8t12 8q-12 7-24 0" fill="#ebe5d9"/></svg></div>
  <button class="task" aria-label="タスク ビュー"><svg viewBox="0 0 24 24"><path d="M1 7h18v16H1z" fill="#2b2b2b"/><path d="M7 2h17v15H7z" fill="#fff"/><path d="M7 7h12v10H7z" fill="#bbb"/></svg></button>
  <button class="task" aria-label="Copilot"><svg viewBox="0 0 24 24"><path d="M8 1h7q2 0 2.500 2l.5 3h-4q-2 0-3 3l-2 6q-1 2-3 2H3q-4 0-2.500-5L3 5q1-4 5-4" fill="url(#gcop)"/><path d="M16 23H9q-2 0-2.500-2L6 18h4q2 0 3-3l2-6q1-2 3-2h3q4 0 2.500 5L21 19q-1 4-5 4" fill="url(#gcop2)"/></svg></button>
  <button class="task open" aria-label="エクスプローラー"><svg viewBox="0 0 24 24"><path d="M0 3q0-2 2-2h6l2 2v5H0z" fill="#d99a1e"/><rect y="4" width="24" height="19" rx="2" fill="#fbc93c"/><path d="M4 23v-5q0-3 3-3h10q3 0 3 3v5z" fill="#1679c4"/></svg></button>
  <button class="task" aria-label="Chrome"><svg><use href="#chrome"/></svg></button>
  <button class="task" aria-label="メール"><svg viewBox="0 0 24 24"><path d="M0 9l12-8 12 8v14H0z" fill="#1862a8"/><path d="M3 7h18v10H3z" fill="#f2f6fa"/><path d="M0 9l12 8L24 9v14H0z" fill="#35b0ea"/><path d="M0 23l12-8 12 8z" fill="#1c86d1"/></svg></button>
  <button class="task" aria-label="ストア"><svg viewBox="0 0 24 24"><path d="M6 8V3q0-1 1-1h10q1 0 1 1v5" fill="none" stroke="#35b5e0" stroke-width="2"/><path d="M1 6h22v15q0 3-3 3H4q-3 0-3-3z" fill="#17558c"/><path d="M7 10h4v4H7z" fill="#f25022"/><path d="M12 10h4v4h-4z" fill="#7fba00"/><path d="M7 15h4v4H7z" fill="#00a4ef"/><path d="M12 15h4v4h-4z" fill="#ffb900"/></svg></button>
  <button class="task open alert-tile" aria-label="Discord"><svg viewBox="0 0 24 24" overflow="visible"><circle cx="12" cy="12" r="12" fill="#5560e8"/><path transform="translate(4.800 5) scale(.6)" fill="#fff" fill-rule="evenodd" d="M20.317 4.370a19.800 19.800 0 0 0-4.885-1.515l-.687 1.287a18.300 18.300 0 0 0-5.487 0l-.696-1.287A19.700 19.700 0 0 0 3.677 4.370C.533 9.046-.319 13.580.1 18.058a20 20 0 0 0 6.100 3.085l1.226-2.100-1.900-1.100.4-.4c3.900 1.800 8.200 1.800 12.100 0l.4.4-1.900 1.100 1.300 2.100a20 20 0 0 0 6-3.085c.5-5.177-.838-9.674-3.509-13.688zM8.020 15.330c-1.180 0-2.150-1.080-2.150-2.420s.95-2.420 2.150-2.420 2.170 1.100 2.150 2.420c0 1.340-.95 2.420-2.150 2.420zm7.970 0c-1.180 0-2.150-1.080-2.150-2.420s.95-2.420 2.150-2.420 2.170 1.100 2.150 2.420c0 1.340-.94 2.420-2.150 2.420z"/><circle cx="21" cy="3" r="7" fill="#d9534a"/><circle cx="21" cy="3" r="3" fill="#fff"/></svg></button>
  <button class="task" aria-label="Edge"><svg viewBox="0 0 24 24"><circle cx="12" cy="12" r="12" fill="url(#gedge)"/><path d="M0 12q1-6 8-6 7 0 7 5-3-1-4 2-1 6 6 7 3 0 5-2-4 6-10 6Q1 23 0 12" fill="#1468b8"/><path d="M3 20Q-1 8 9 7q5 0 6 4-6-1-6 5 1 6 7 7-8 3-13-3" fill="#0f4f9c"/><path d="M11 13q1-2 3-2 0 5 4 6 4 0 6-3-1 5-5 6-8 0-8-7" fill="#f1f0f0"/></svg></button>
  <button class="task open" aria-label="ChatGPT"><svg viewBox="0 0 24 24" fill="#111"><path d="M22.2819 9.8211a5.9847 5.9847 0 0 0-.5157-4.9108 6.0462 6.0462 0 0 0-6.5098-2.9A6.0651 6.0651 0 0 0 4.9807 4.1818a5.9847 5.9847 0 0 0-3.9977 2.9 6.0462 6.0462 0 0 0 .7427 7.0966 5.98 5.98 0 0 0 .511 4.9107 6.051 6.051 0 0 0 6.5146 2.9001A5.9847 5.9847 0 0 0 13.2599 24a6.0557 6.0557 0 0 0 5.7718-4.2058 5.9894 5.9894 0 0 0 3.9977-2.9001 6.0557 6.0557 0 0 0-.7475-7.0729zm-9.022 12.6081a4.4755 4.4755 0 0 1-2.8764-1.0408l.1419-.0804 4.7783-2.7582a.7948.7948 0 0 0 .3927-.6813v-6.7369l2.02 1.1686a.071.071 0 0 1 .038.052v5.5826a4.504 4.504 0 0 1-4.4945 4.4944zm-9.6607-4.1254a4.4708 4.4708 0 0 1-.5346-3.0137l.142.0852 4.783 2.7582a.7712.7712 0 0 0 .7806 0l5.8428-3.3685v2.3324a.0804.0804 0 0 1-.0332.0615L9.74 19.9502a4.4992 4.4992 0 0 1-6.1408-1.6464zM2.3408 7.8956a4.485 4.485 0 0 1 2.3655-1.9728V11.6a.7664.7664 0 0 0 .3879.6765l5.8144 3.3543-2.0201 1.1685a.0757.0757 0 0 1-.071 0l-4.8303-2.7865A4.504 4.504 0 0 1 2.3408 7.872zm16.5963 3.8558L13.1038 8.364 15.1192 7.2a.0757.0757 0 0 1 .071 0l4.8303 2.7913a4.4944 4.4944 0 0 1-.6765 8.1042v-5.6772a.79.79 0 0 0-.407-.667zm2.0107-3.0231l-.142-.0852-4.7735-2.7818a.7759.7759 0 0 0-.7854 0L9.409 9.2297V6.8974a.0662.0662 0 0 1 .0284-.0615l4.8303-2.7866a4.4992 4.4992 0 0 1 6.6802 4.66zM8.3065 12.863l-2.02-1.1638a.0804.0804 0 0 1-.038-.0567V6.0742a4.4992 4.4992 0 0 1 7.3757-3.4537l-.142.0805L8.704 5.459a.7948.7948 0 0 0-.3927.6813zm1.0976-2.3654l2.602-1.4998 2.6069 1.4998v2.9994l-2.5974 1.4997-2.6067-1.4997Z"/></svg></button>
  <button class="task open" aria-label="Chrome プロファイル"><svg viewBox="0 0 24 24" overflow="visible"><use href="#chrome" width="24" height="24"/><circle cx="21" cy="3" r="8" fill="#6d1f96"/><circle cx="21" cy="3" r="2" fill="none" stroke="#e8c8f4"/></svg></button>
  <button class="task open" aria-label="NTR"><svg viewBox="0 0 24 24"><rect width="24" height="24" rx="2" fill="#222"/><path d="M7 20V9q0-5 5-5t5 4.500-5 4.500h-2" fill="none" stroke="#d8d8d8" stroke-width="3"/><text x="17" y="23" font-size="6" font-weight="700" text-anchor="middle" fill="#fff" font-family="Open Sans">NTR</text></svg></button>
  <button class="task open active" aria-label="ゆっくりMovieMaker"><svg><use href="#logo"/></svg></button>
 </div>
 <div class="side tray d-flex align-items-center justify-content-end">
  <svg viewBox="0 0 18 18" class="me-3" fill="none" stroke="#222" stroke-width="2"><path d="M4 11l5-5 5 5"/></svg>
  <svg viewBox="0 0 18 18" class="me-3" fill="none" stroke="#1d5a68" stroke-width="1.500"><rect x="6" y="1" width="6" height="10" rx="3"/><path d="M3 8q0 6 6 6t6-6M9 14v3"/></svg>
  <svg viewBox="0 0 18 18" class="me-3" fill="none" stroke="#aaa" stroke-width="1.500"><circle cx="9" cy="4" r="2"/><path d="M8 6L5 14M10 6l3 8M7 10h4M4 14h4M10 14h4"/></svg>
  <svg viewBox="0 0 18 18" class="ms-1 me-3"><circle cx="8" cy="9" r="7" fill="#0d6fd8"/><circle cx="15" cy="13" r="3" fill="#c8302a"/><circle cx="12" cy="15" r="2" fill="#f0b428"/></svg>
  <svg viewBox="0 0 18 18" class="ms-1 me-2" fill="none" stroke="#222" stroke-width="1.300"><path d="M1 7q8-8 16 0M4 10q5-5 10 0M6 12q3-3 6 0"/><circle cx="9" cy="14" r="1" fill="#222"/></svg>
  <svg viewBox="0 0 18 18" class="me-3" fill="none" stroke="#222" stroke-width="1.300"><path d="M1 6h3l4-4v14l-4-4H1zM11 6q2 3 0 6M13 4q3 5 0 10M15 2q4 7 0 14"/></svg>
  <div class="clock-text me-2">20:05<br>2025/08/18</div>
  <svg viewBox="0 0 18 18" fill="#222"><path d="M3 13V8q0-6 6-6l2 1v4h5l-1 6 1 2H1zM7 16h4q-2 2-4 0"/><path d="M6 6h4l-4 5h4" fill="none" stroke="#fff"/><path d="M12 1h4l-4 4h4" fill="none" stroke="#222"/></svg>
 </div>
</footer>
</body>
</html>
